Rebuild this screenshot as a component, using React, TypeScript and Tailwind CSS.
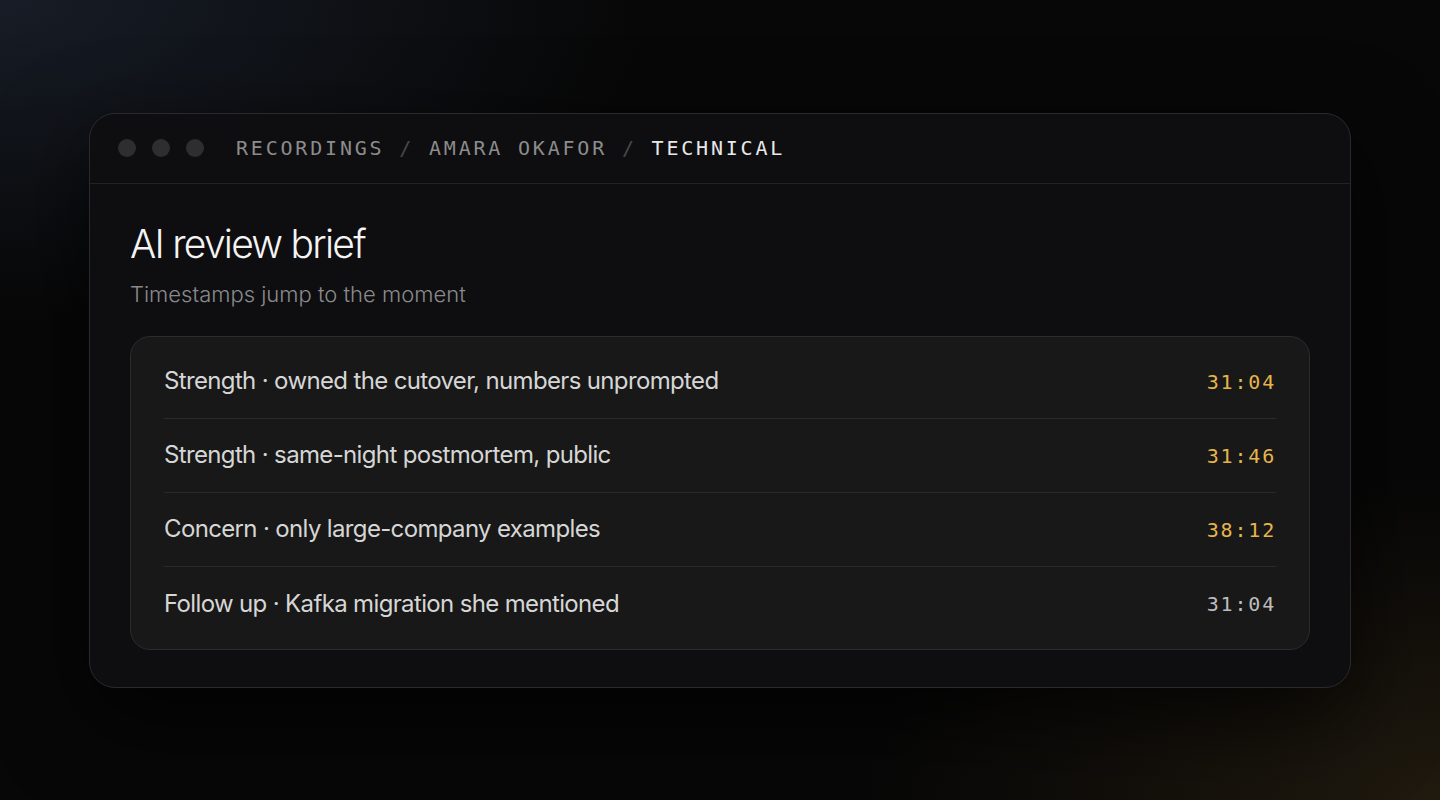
const rows = [
  { label: "Strength · owned the cutover, numbers unprompted", time: "31:04", accent: true },
  { label: "Strength · same-night postmortem, public", time: "31:46", accent: true },
  { label: "Concern · only large-company examples", time: "38:12", accent: true },
  { label: "Follow up · Kafka migration she mentioned", time: "31:04", accent: false },
];

export default function App() {
  return (
    <div className="relative flex h-[800px] w-full items-center justify-center overflow-hidden bg-[#070707]">
      <div className="pointer-events-none absolute inset-0 bg-[radial-gradient(ellipse_45%_40%_at_0%_0%,rgba(36,46,64,0.55),transparent)]" />
      <div className="pointer-events-none absolute inset-0 bg-[radial-gradient(ellipse_40%_40%_at_100%_100%,rgba(62,48,24,0.45),transparent)]" />

      <div className="relative w-[1262px] overflow-hidden rounded-[26px] border border-[#2a2a2c] bg-[#0e0e10] shadow-[0_30px_90px_rgba(0,0,0,0.7)]">
        <div className="flex h-[70px] items-center border-b border-[#232325] pl-[28px]">
          <div className="flex gap-4">
            <span className="h-[18px] w-[18px] rounded-full bg-[#2e2e30]" />
            <span className="h-[18px] w-[18px] rounded-full bg-[#2e2e30]" />
            <span className="h-[18px] w-[18px] rounded-full bg-[#2e2e30]" />
          </div>
          <div className="ml-[32px] font-['DejaVu_Sans_Mono',monospace] text-[20px] uppercase tracking-[0.14em] text-[#8c8c8c]">
            <span>Recordings</span>
            <span className="text-[#48484a]"> / </span>
            <span>Amara Okafor</span>
            <span className="text-[#48484a]"> / </span>
            <span className="text-[#e8e8e8]">Technical</span>
          </div>
        </div>

        <div className="px-[40px] pb-[37px] pt-[36px]">
          <h1 className="font-['Inter',sans-serif] text-[39px] font-light leading-[48px] tracking-[-0.045em] text-[#f4f4f4]">
            AI review brief
          </h1>
          <p className="mt-[12px] font-['Inter',sans-serif] text-[22px] font-light leading-[28px] text-[#8a8a8c]">
            Timestamps jump to the moment
          </p>

          <div className="mt-[28px] rounded-[20px] border border-[#2c2c2e] bg-[#181818] px-[33px] py-[8px]">
            {rows.map((row, i) => (
              <div
                key={i}
                className={
                  "flex h-[74px] items-center justify-between " +
                  (i < rows.length - 1 ? "border-b border-[#2a2a2a]" : "")
                }
              >
                <span className="font-['Inter',sans-serif] text-[24px] font-normal tracking-[-0.027em] text-[#d6d6d6]">
                  {row.label}
                </span>
                <span
                  className={
                    "mt-[1px] font-['DejaVu_Sans_Mono',monospace] text-[20px] tracking-[0.09em] " +
                    (row.accent ? "text-[#e6b44c]" : "text-[#bdbdbd]")
                  }
                >
                  {row.time}
                </span>
              </div>
            ))}
          </div>
        </div>
      </div>
    </div>
  );
}
